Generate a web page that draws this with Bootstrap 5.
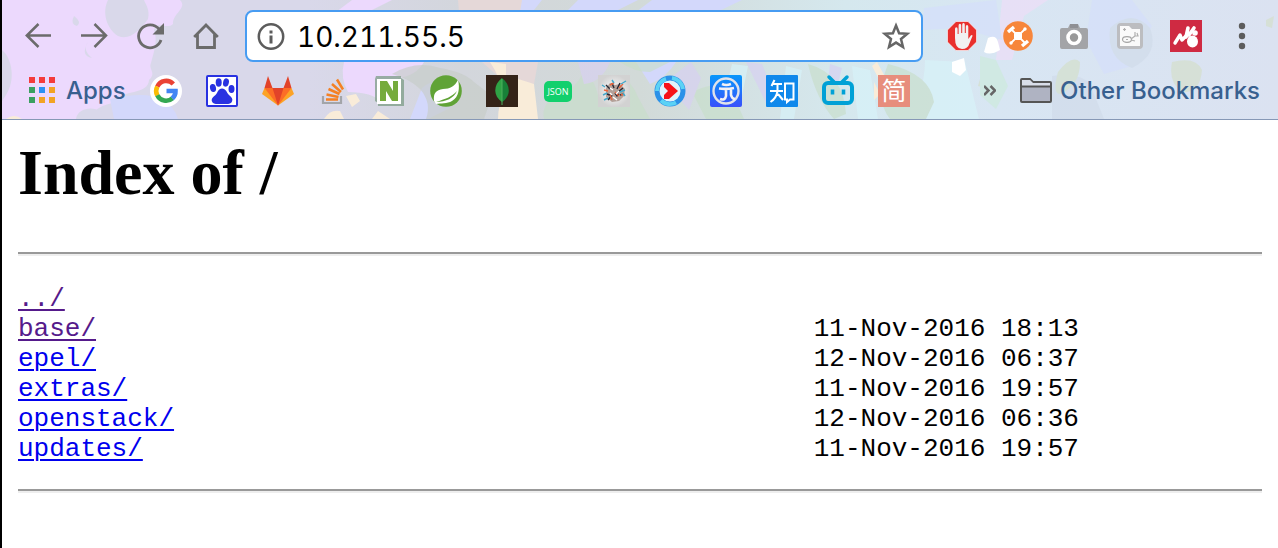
<!DOCTYPE html>
<html lang="en">
<head>
<meta charset="utf-8">
<meta name="viewport" content="width=device-width, initial-scale=1">
<title>Index of /</title>
<link href="https://cdn.jsdelivr.net/npm/bootstrap@5.3.0/dist/css/bootstrap.min.css" rel="stylesheet">
<style>
  body { font-family: Inter, "Noto Sans CJK SC", sans-serif; color: #000; background: #fff; }
  .window { border-left: 2px solid #000; }
  .chrome-bar { background: #d9d8ea; border-bottom: 1px solid #8698b6; padding-bottom: 12px; }
  .theme-art { width: 100%; height: 100%; }
  .tool-row { padding: 10px 20px 0; gap: 23px; }
  .mark-row { padding: 12px 18px 0 26px; }
  .icon-set { gap: 24px; }
  .icon-box { width: 32px; height: 32px; flex: none; padding: 0; border: 0; background: none; display: block; }
  .icon-box svg { display: block; width: 32px; height: 32px; overflow: visible; }
  .address { height: 52px; border: 2px solid #479cf2; border-radius: 8px; background: #fff; padding: 2px 9px 0 8px; gap: 10px; }
  .address input { font-size: 28px; line-height: 32px; font-variant-numeric: tabular-nums; color: #000; outline: 0; min-width: 0; }
  .mark-label { font-size: 24px; line-height: 32px; font-weight: 500; color: #38608f; gap: 8px; white-space: nowrap; }
  .mark-label span { padding-top: 1px; }
  .mark-label svg, .more svg { display: block; }
  .listing { padding: 16px 16px 56px; }
  .listing h1 { font: bold 64px/74px "Liberation Serif", serif; margin: 0 0 42px; }
  .listing hr { margin: 0; opacity: 1; border-top: 2px solid #999; border-bottom: 2px solid #eee; height: 4px; }
  .files { font: 26px/30px "Liberation Mono", monospace; margin: 28px 0 25px; }
  .files td { padding: 0; white-space: nowrap; }
  .files td:first-child { width: 51ch; }
  .files a { color: #0000ee; text-decoration-thickness: 2px; text-underline-offset: 3px; }
  .files a.seen { color: #551a8b; }
</style>
</head>
<body>
<div class="window min-vh-100">
  <header class="chrome-bar position-relative">
    <svg class="theme-art position-absolute top-0 start-0" viewBox="0 0 1276 119" preserveAspectRatio="none" aria-hidden="true">
      <defs><linearGradient id="wash"><stop offset="0" stop-color="#d9d8ea"/><stop offset=".24" stop-color="#d9d8ea"/><stop offset=".36" stop-color="#d3d6dc"/><stop offset=".5" stop-color="#d2dad8"/><stop offset=".66" stop-color="#d5e8ee"/><stop offset=".78" stop-color="#d8e6f3"/><stop offset="1" stop-color="#dbe2f1"/></linearGradient></defs>
      <path fill="url(#wash)" d="M0 0h1276v119H0z"/>
      <path fill="#ecd9fd" d="M0 0h106c-6 12-2 28 10 36 12 5 22-6 30-17 2-9-2-14-4-19h36c8 8-8 14-7 24-6 6-16-4-19 6 4 10 0 22-3 33-3 6 6 10-2 17-1 14-22 10-30 18-8 10-20 2-28 21H0z"/>
      <path fill="#d9d8ea" d="M0 50c10 8 14 30 4 45l-4 6zM72 16q8 6 3 10-7-2-3-10zM86 42q-6 8 4 16-12-2-4-16zM74 119c2-14 26-14 32 0z"/>
      <path fill="#d3d8fb" d="M108 99q36-8 50 0 14 6 18 20h-64zM508 0h32l-8 10h-24zM610 30l40-30h90l-50 24z"/>
      <path fill="#f9ecd9" d="M4 119q8-6 16 0z"/>
      <path fill="#ecd9fd" d="M350 0h40l-24 12h-32zM342 62h80q-8 14-26 16-4 22-16 24-10-10-34-10-8-14-4-30z"/>
      <path fill="#d3d8fb" d="M420 88q20-16 34 0l-6 20-22 11h-18zM576 0h60l-20 10h-50zM634 62h40q-10 16-26 22z"/>
      <path fill="#e5d8d8" d="M456 0h64l-4 24h-58zM480 62h56l-4 22-34-6z"/>
      <path fill="#f9ecd9" d="M344 96l10-2 4 7-8 6zM322 119q6-10 16-8l4 8zM370 119l6-8 12 8zM488 62l16 2 0 11 28 9 4 35h-40q0-14 6-24-4-18-14-33z"/>
      <g opacity=".65">
        <path fill="#c6cdc7" d="M390 74q24-14 48-6 24 4 34 14l18 14-8 23h-58q6-16-6-30-10-10-28-15z"/>
        <path fill="#c8dfca" d="M542 119q-4-18 20-26 12-6 18-18 10-2 16 20l20-20q14 6 20 22l12 22zM618 62q14 10 30 10l20-10zM690 92q30-14 40 0l12 27h-38z"/>
        <path fill="#d8d0f3" d="M576 62h32q-8 20-26 22zM663 82l26-20 10 16-12 32zM744 62l16 2 14 35-8 8zM828 64l12 4-8 32-8-4z"/>
        <path fill="#d8f4fa" d="M730 64l16 2-8 40h-18zM784 66l16 4-8 49h-14zM850 66l18 4 8 49h-20zM923 60l40 2 14 57h-80q26-20 26-59z"/>
        <path fill="#c8deca" d="M806 64q36 10 38 50l-12 5q-18-20-26-55zM886 64q42 10 46 38l-8 17h-36q-16-20-2-55z"/>
        <path fill="#f0def8" d="M1000 0h46l-24 16-12 44h-16z"/>
        <path fill="#d5dffc" d="M922 8l72-8 6 40-42-12-38 2zM1090 0h40l20 26-20 40-28 8-18-34z"/>
        <path fill="#d0dbea" d="M1108 28q22-20 40 0 10 26-18 40-26-10-22-40zM1050 76q28-4 38 8l14 35h-52z"/>
        <path fill="#d4dfc9" d="M1056 72q14-18 22-10 0 24-20 32-8 0-2-22zM1170 62q24-6 30 8-2 24-20 22-14-10-10-30zM980 72l14 6-4 12-14-4zM1264 20l8-4-2 12-6-2z"/>
        <path fill="#cdebdc" d="M978 56l16 4 12 26-12 23-16-14z"/>
      </g>
      <path fill="#f9ecd9" d="M870 66l5-4 12 22-5 5zM872 82l6 12-6 6z"/>
      <path fill="#fff" d="M986 38q8-4 10 4l2 8q-10 6-16 2zM950 62l12-4 2 12-6 6-8-4z"/>
    </svg>

    <div class="position-relative">
      <div class="tool-row d-flex align-items-center">
        <nav class="icon-set d-flex" aria-label="Page history">
          <button class="icon-box" type="button" aria-label="Back"><svg viewBox="0 0 32 32" fill="none" stroke="#6b6b6b" stroke-width="2.5"><path d="M16.500 4 4.800 15.500 16.500 27M5 15.500h24"/></svg></button>
          <button class="icon-box" type="button" aria-label="Forward"><svg viewBox="0 0 32 32" fill="none" stroke="#6b6b6b" stroke-width="2.500"><path d="M16.500 4 28 15.500 16.500 27M3 15.500h25"/></svg></button>
          <button class="icon-box" type="button" aria-label="Reload"><svg viewBox="0 0 32 32"><path d="M25 9A11.500 11.500 0 1 0 27 20" fill="none" stroke="#6b6b6b" stroke-width="2.800"/><path d="M30 3v11.500H18.500z" fill="#6b6b6b"/></svg></button>
          <button class="icon-box" type="button" aria-label="Home"><svg viewBox="0 0 32 32" fill="none" stroke="#6b6b6b" stroke-width="2.800"><path d="M4.200 17 16 5l11.800 12M7.500 14.500v13h17v-13"/></svg></button>
        </nav>

        <form class="address d-flex align-items-center flex-grow-1">
          <svg width="32" height="32" viewBox="0 0 32 32" aria-hidden="true"><circle cx="16" cy="15.500" r="12.200" fill="none" stroke="#5c5c5c" stroke-width="2.500"/><path d="M14.500 9.500h3v3h-3zm0 5h3v8h-3z" fill="#5c5c5c"/></svg>
          <input class="flex-grow-1 border-0 p-0 bg-transparent" type="text" value="10.211.55.5" aria-label="Address">
          <button class="icon-box" type="button" aria-label="Bookmark this page"><svg viewBox="0 0 32 32" fill="none" stroke="#666" stroke-width="2.500"><path d="m16 4.500 3.100 7.700 8.200.6-6.300 5.200 2 8-7-4.400L9 26l2-8-6.300-5.200 8.200-.6z"/></svg></button>
        </form>

        <div class="icon-set d-flex">
          <button class="icon-box" type="button" aria-label="Ad blocker"><svg viewBox="0 0 32 32"><path d="M10 1.500h12L30.500 10v12L22 30.500H10L1.500 22V10z" fill="#e9302d" stroke="#fff" stroke-opacity=".6"/><path d="M9 18V9q0-1.800 1.300-1.800T11.600 9v5h1V5.500q0-1.800 1.300-1.800t1.300 1.800V13h1V4.800Q16.200 3 17.500 3t1.300 1.800V13h1V6.800Q19.800 5 21 5t1.300 1.800V19l2.500-3.500q1.200-1 1.800.2l-3 7.300q-1.600 6-7.600 6-7 0-7-11z" fill="#f1f1f1"/></svg></button>
          <button class="icon-box" type="button" aria-label="Drone extension"><svg viewBox="0 0 32 32"><circle cx="16" cy="16" r="14.800" fill="#f7863b"/><path d="m9 9 14 14M23 9 9 23" stroke="#fff" stroke-width="1.800"/><rect x="12" y="12" width="8" height="8" rx="2" fill="#fff"/><path d="m6 12 6-5M20 26l6-5" stroke="#fff" stroke-width="3.400"/><circle cx="23" cy="9" r="1.700" fill="#fff"/><circle cx="9" cy="23" r="1.700" fill="#fff"/></svg></button>
          <button class="icon-box" type="button" aria-label="Screen capture"><svg viewBox="0 0 32 32"><path d="M4 8h6l2-4h8l2 4h6q2 0 2 2v17q0 2-2 2H4q-2 0-2-2V10q0-2 2-2z" fill="#a3a4a7"/><path d="M12 4h8v4h-8z" fill="#8f9094"/><circle cx="16" cy="17.500" r="6" fill="#999" stroke="#fff" stroke-width="3.600"/></svg></button>
          <button class="icon-box" type="button" aria-label="Notes"><svg viewBox="0 0 32 32"><rect x="3" y="3" width="26" height="26" rx="4" fill="#bcbdc0"/><path d="M6 6h9l3 3h8v17H6z" fill="#fafafa"/><ellipse cx="13" cy="19.500" rx="4.500" ry="2.800" fill="none" stroke="#a5a5a5" stroke-width="1.200"/><path d="M9 9.500h3m-1.500-1.500v3M17 19l4-3m-4 4 4 1m0-9v4h3l-1-3M12 19.500h2" fill="none" stroke="#b0b0b0" stroke-width="1.200"/></svg></button>
          <button class="icon-box" type="button" aria-label="Mail extension"><svg viewBox="0 0 32 32"><path fill="#cf2a42" d="M0 0h32v32H0z"/><path d="m5 23 5-8 2 5 5-5" fill="none" stroke="#fff" stroke-width="3.400" stroke-linejoin="round" stroke-linecap="round"/><path d="m16 17 2-9M19 15l5-7" stroke="#fff" stroke-width="3.600" stroke-linecap="round"/><ellipse cx="22.500" cy="21.500" rx="5.500" ry="6" fill="#fff"/><circle cx="25" cy="13" r="2.800" fill="#fff"/></svg></button>
          <button class="icon-box" type="button" aria-label="Menu"><svg viewBox="0 0 32 32" fill="#5c5c5c"><circle cx="16" cy="6" r="3.200"/><circle cx="16" cy="16" r="3.200"/><circle cx="16" cy="26" r="3.200"/></svg></button>
        </div>
      </div>

      <nav class="mark-row d-flex align-items-center" aria-label="Bookmarks">
        <a class="mark-label d-flex align-items-center text-decoration-none me-4" href="#"><svg width="30" height="30" viewBox="0 0 30 30" aria-hidden="true"><path fill="#f43b3b" d="M1 1h6v6H1zm10 0h6v6h-6zm10 0h6v6h-6z"/><path fill="#3aa060" d="M1 11h6v6H1zm0 10h6v6H1z"/><path fill="#2a91f4" d="M11 11h6v6h-6z"/><path fill="#f2a324" d="M21 11h6v6h-6zM11 21h6v6h-6zm10 0h6v6h-6z"/></svg><span>Apps</span></a>
        <div class="icon-set d-flex">
          <a class="icon-box" href="#" aria-label="Google"><svg viewBox="0 0 32 32"><circle cx="16" cy="16" r="16" fill="#fff"/><g fill="none" stroke-width="4.600"><path stroke="#ea4335" d="M23.300 9A9.700 9.700 0 0 0 7.300 11.700"/><path stroke="#fbbc05" d="M7.300 11.500a9.700 9.700 0 0 0 0 9"/><path stroke="#34a853" d="M7.300 20.300A9.700 9.700 0 0 0 22.500 23.300"/><path stroke="#4285f4" d="M16.500 16h9a9.700 9.700 0 0 1-3.200 7.500"/></g></svg></a>
          <a class="icon-box" href="#" aria-label="Baidu"><svg viewBox="0 0 32 32"><rect x="1" y="1" width="30" height="30" rx="1" fill="#fff" stroke="#2932e1" stroke-width="2"/><g fill="#2932e1"><ellipse cx="7" cy="13" rx="3" ry="4" transform="rotate(-12 7 13)"/><ellipse cx="12.700" cy="7.500" rx="3" ry="4.200"/><ellipse cx="20" cy="7.500" rx="2.900" ry="4.200" transform="rotate(12 20 7.500)"/><ellipse cx="25.500" cy="14" rx="3" ry="4"/><path d="M16 13.500c4 0 4.500 4 7 6.500 3 2.500 4 4 3 6.500-1 3-4 2.500-10 2.500s-9 .5-10-2.500c-1-2.500 1-4.500 3.500-6.500 2.500-2.500 2.500-6.500 6.500-6.500z"/></g></svg></a>
          <a class="icon-box" href="#" aria-label="GitLab"><svg viewBox="0 0 32 32"><path fill="#fca326" d="M2.500 13 0 19l16 11.500L32 19l-2.500-6z"/><path fill="#fc6d26" d="M2.500 13h27L16 30.500z"/><path fill="#e24329" d="m10.500 13 5.500 17.500L21.500 13zM6 1 2.500 13h8zM26 1l3.500 12h-8z"/></svg></a>
          <a class="icon-box" href="#" aria-label="Stack Overflow"><svg viewBox="0 0 32 32" fill="none"><path d="M5 21v7h18v-7" stroke="#a3a5a9" stroke-width="2.200"/><path d="M8 24.500h12M8.500 19.500l12 2.500M10.500 14l11 5M14 9l9 8M19 4.500l6 10" stroke="#f48024" stroke-width="2.500"/></svg></a>
          <a class="icon-box" href="#" aria-label="Naver"><svg viewBox="0 0 32 32"><path d="M2 1h25v2l3 2v26H4v-3L1 26V4z" fill="#7c9c86" opacity=".75"/><path fill="#fff" d="M3 4h24v25H3z"/><path fill="#76ab3d" d="M6 6h7l6 10V6h5v20h-6l-6-10v10H6z"/></svg></a>
          <a class="icon-box" href="#" aria-label="Spring"><svg viewBox="0 0 32 32"><circle cx="16" cy="16" r="15.800" fill="#60a336"/><path d="M28 5c2 8 1 17-6 21-5 3-11 2-16 3l-2-3c-1-8 2-11 9-12 7 0 12-3 15-9z" fill="#fff"/><path d="M6 27c10 0 18-4 21-11-5 6-12 8-21 11z" fill="#60a336"/></svg></a>
          <a class="icon-box" href="#" aria-label="MongoDB"><svg viewBox="0 0 32 32"><path fill="#352318" d="M0 0h32v32H0z"/><path fill="#2fa345" d="M16 3C7 10 7 21 16 27z"/><path fill="#188038" d="M16 3c9 7 9 18 0 24z"/><path d="M16 4v26" stroke="#4fae5e"/></svg></a>
          <a class="icon-box" href="#" aria-label="JSON"><svg viewBox="0 0 32 32"><rect x="2" y="6" width="28" height="21" rx="5" fill="#12d06d"/><text x="16" y="20" text-anchor="middle" font-family="Open Sans, sans-serif" font-size="9" fill="#fff">JSON</text></svg></a>
          <a class="icon-box" href="#" aria-label="Tiger"><svg viewBox="0 0 32 32"><defs><radialGradient id="pearl"><stop stop-color="#fff"/><stop offset="1" stop-color="#d2d2d2"/></radialGradient></defs><path fill="url(#pearl)" d="M0 0h32v32H0z"/><path d="m8 13 4-5 5 2 5-1 5 5-1 7-5 5-7 1-6-5z" fill="#b3a199"/><g stroke-width="1.400"><path d="m8 10 4 4m2-6 2 5m6-5-3 6m6-1-5 4m2 3 4-1M9 19l5 2m-4 4 4-5m3-2 2 3 2-2" stroke="#262733" fill="none"/><path d="m6 15 4 1m2-6 4-2m5 5 4-4m-8 8 4 4m-9-1 2 5m9-5 3-1" stroke="#ed643b"/><path d="m4 10 3 2m-2 8 4-2m-3 7 4-2m12-6 5-2m-4-6 5-3m-3 12 2 3M14 5l2 3" stroke="#43a8cb"/><path d="m12 13 3 2m3 4 3-3m-6 6 4 3m-7-7 2 2" stroke="#fff"/></g></svg></a>
          <a class="icon-box" href="#" aria-label="Video"><svg viewBox="0 0 32 32"><circle cx="16" cy="16" r="13" fill="#e1f3fb" stroke="#2b91e8" stroke-width="5"/><path d="M3 16a13 13 0 0 1 9-12M18 3a13 13 0 0 1 11 11M22 27.500a13 13 0 0 1-15-2" fill="none" stroke="#5bd2f5" stroke-width="4"/><path d="M10 8h5l9 8-9 8h-5v-4l4-4-4-4z" fill="#f71218"/></svg></a>
          <a class="icon-box" href="#" aria-label="Jikexueyuan"><svg viewBox="0 0 32 32"><defs><linearGradient id="deep" x2="0" y2="1"><stop stop-color="#0797fb"/><stop offset="1" stop-color="#3950fb"/></linearGradient></defs><rect width="32" height="32" rx="2" fill="url(#deep)"/><circle cx="16" cy="16" r="12.500" fill="none" stroke="#e0e2ea" stroke-width="2.400"/><path d="M12 9q4 2 9 0M9 13.500q7 1 15-.5M16 14v7q-1 5-6 3M21 14v6q1 4 4 4" fill="none" stroke="#f1f1f5" stroke-width="2.600"/></svg></a>
          <a class="icon-box" href="#" aria-label="Zhihu"><svg viewBox="0 0 32 32"><rect width="32" height="32" rx="1" fill="#0f88eb"/><path d="m8.500 5-3 6M7 9h9M4 16h13M11.500 9v7q-1 7-7 11M12 19l5 6M19 8.500h8.500v16H24l-3 2.500v-2.500h-2z" fill="none" stroke="#fff" stroke-width="2"/></svg></a>
          <a class="icon-box" href="#" aria-label="Bilibili"><svg viewBox="0 0 32 32"><rect x="2" y="8" width="28" height="20" rx="4" fill="none" stroke="#00a1d6" stroke-width="4"/><path d="m7 2 5 5M25 2l-5 5" stroke="#00a1d6" stroke-width="3.500" stroke-linecap="round"/><path d="M10.500 14.500v5M21.500 14.500v5" stroke="#00a1d6" stroke-width="3.600"/></svg></a>
          <a class="icon-box" href="#" aria-label="Jianshu"><svg viewBox="0 0 32 32"><path fill="#e78d7c" d="M0 0h32v32H0z"/><text x="16" y="25" text-anchor="middle" font-family="Noto Sans CJK SC, sans-serif" font-size="25" fill="#fff">简</text></svg></a>
        </div>
        <button class="more border-0 bg-transparent p-0 ms-auto me-4" type="button" aria-label="More bookmarks"><svg width="12" height="32" viewBox="0 0 12 32" fill="none" stroke="#666" stroke-width="2.500"><path d="m0 11 4.500 4.500L0 20m6.500-9 4.500 4.500L6.500 20"/></svg></button>
        <a class="mark-label d-flex align-items-center text-decoration-none" href="#"><svg width="32" height="32" viewBox="0 0 32 32" aria-hidden="true"><path d="M1 5q0-1 1-1h8l3 3h17q1 0 1 1v18q0 1-1 1H2q-1 0-1-1z" fill="#afb3c2" stroke="#555" stroke-width="2"/><path d="M2 5h8l3 3h17v3H2z" fill="#d9dee9"/><path d="M1 11.500h30" stroke="#555" stroke-width="2"/></svg><span>Other Bookmarks</span></a>
      </nav>
    </div>
  </header>

  <main class="listing">
    <h1>Index of /</h1>
    <hr>
    <table class="files">
      <tbody>
        <tr><td><a class="seen" href="#">../</a></td><td></td></tr>
        <tr><td><a class="seen" href="#">base/</a></td><td>11-Nov-2016 18:13</td></tr>
        <tr><td><a href="#">epel/</a></td><td>12-Nov-2016 06:37</td></tr>
        <tr><td><a href="#">extras/</a></td><td>11-Nov-2016 19:57</td></tr>
        <tr><td><a href="#">openstack/</a></td><td>12-Nov-2016 06:36</td></tr>
        <tr><td><a href="#">updates/</a></td><td>11-Nov-2016 19:57</td></tr>
      </tbody>
    </table>
    <hr>
  </main>
</div>
<script src="https://cdn.jsdelivr.net/npm/bootstrap@5.3.0/dist/js/bootstrap.bundle.min.js"></script>
</body>
</html>
